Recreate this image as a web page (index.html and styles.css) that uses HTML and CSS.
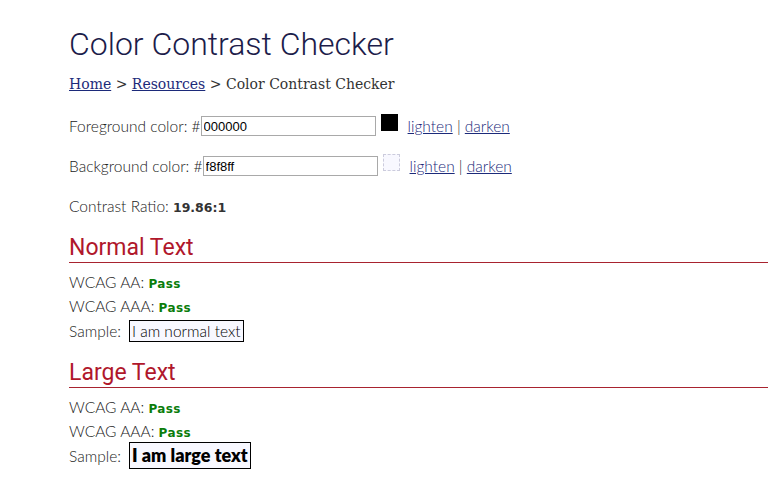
FILE: index.html
```html
<!DOCTYPE html>
<html>
<head>
<meta charset="utf-8">
<link rel="stylesheet" href="styles.css">
</head>
<body>
<main class="page">
  <h1 class="title">Color Contrast Checker</h1>
  <nav class="crumbs"><a href="#">Home</a> &gt; <a href="#">Resources</a> &gt; Color Contrast Checker</nav>

  <div class="color-row fg">
    <label>Foreground color: #</label><input class="hex" type="text" value="000000"><span class="swatch swatch-fg"></span>
    <span class="links"><a href="#">lighten</a> | <a href="#">darken</a></span>
  </div>
  <div class="color-row bg">
    <label>Background color: #</label><input class="hex" type="text" value="f8f8ff"><span class="swatch swatch-bg"></span>
    <span class="links"><a href="#">lighten</a> | <a href="#">darken</a></span>
  </div>

  <p class="ratio">Contrast Ratio: <b>19.86:1</b></p>

  <h2 class="section">Normal Text</h2>
  <p class="line">WCAG AA: <b class="pass">Pass</b></p>
  <p class="line">WCAG AAA: <b class="pass">Pass</b></p>
  <p class="line sample-line">Sample: <span class="sample normal">I am normal text</span></p>

  <h2 class="section">Large Text</h2>
  <p class="line">WCAG AA: <b class="pass">Pass</b></p>
  <p class="line">WCAG AAA: <b class="pass">Pass</b></p>
  <p class="line sample-line">Sample: <span class="sample large">I am large text</span></p>
</main>
</body>
</html>
```

FILE: styles.css
```css
html, body {
  margin: 0;
  padding: 0;
  background: #ffffff;
}
body {
  font-family: "Lato", "Open Sans", sans-serif;
  font-weight: 300;
  font-size: 15.5px;
  color: #222;
}
.page {
  padding: 25px 8px 20px 69px;
}
.title {
  margin: 0;
  height: 38px;
  font-family: "Roboto", sans-serif;
  font-weight: 300;
  font-size: 32px;
  line-height: 38px;
  color: #1c1c4a;
}
.crumbs {
  margin-top: 12px;
  height: 18px;
  font-family: "DejaVu Serif", serif;
  font-size: 14px;
  line-height: 18px;
  color: #333;
}
.crumbs a, .links a {
  color: #1c2a7a;
}
.color-row {
  display: flex;
  align-items: center;
  margin-top: 21px;
  height: 24px;
}
.color-row + .color-row {
  margin-top: 16px;
}
.hex {
  width: 169px;
  height: 18px;
  padding: 0 2px;
  margin: 0;
  border: 1px solid #a9a9a9;
  font-family: "Liberation Sans", sans-serif;
  font-size: 13px;
  color: #000;
}
.swatch {
  display: inline-block;
  width: 15px;
  height: 15px;
  border: 1px dashed #ccccdd;
  margin: -8px 0 0 5px;
}
.swatch-fg { background: #000; border-color: #000; }
.swatch-bg { background: #f8f8ff; }
.links {
  margin-left: 10px;
}
.ratio {
  margin: 16px 0 0;
  height: 24px;
  line-height: 24px;
}
.ratio b {
  font-family: "DejaVu Sans", sans-serif;
  font-weight: bold;
  font-size: 12.5px;
  color: #333;
}
.section {
  margin: 16px 0 7px;
  height: 28px;
  font-family: "Roboto", sans-serif;
  font-weight: 400;
  font-size: 23px;
  line-height: 28px;
  color: #b0172b;
  border-bottom: 1px solid #a8232f;
}
.line {
  margin: 0;
  height: 24px;
  line-height: 24px;
}
.sample-line {
  display: flex;
  align-items: center;
  height: 25px;
}
.pass {
  font-family: "DejaVu Sans", sans-serif;
  font-weight: bold;
  font-size: 12px;
  letter-spacing: 0.4px;
  color: #0b7d0b;
}
.sample {
  display: inline-block;
  margin-left: 8px;
  border: 1px solid #000;
  background: #f8f8ff;
  color: #000;
  padding: 0 2px;
  height: 20px;
  line-height: 20px;
}
.sample.large {
  font-family: "Lato", sans-serif;
  font-weight: 800;
  font-size: 18px;
  height: 25px;
  line-height: 25px;
}
```
